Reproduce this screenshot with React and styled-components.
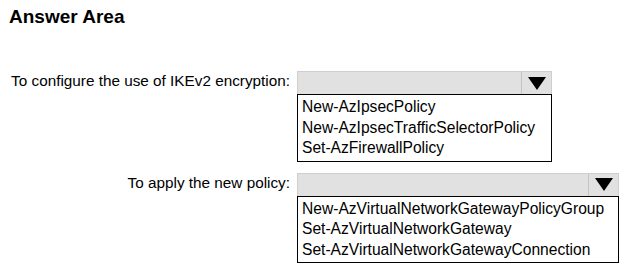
import React from "react";
import styled, { createGlobalStyle } from "styled-components";

const Global = createGlobalStyle`
  html, body { margin: 0; padding: 0; background: #fff; }
  body { font-family: "Liberation Sans", Arial, sans-serif; color: #000; }
`;

const Page = styled.div`
  width: 624px;
  height: 267px;
  padding: 6px 0 0 9px;
  box-sizing: border-box;
`;

const Title = styled.h1`
  margin: 0;
  font-size: 19px;
  font-weight: bold;
  line-height: 22px;
`;

const Rows = styled.div`
  display: grid;
  grid-template-columns: 281px auto;
  column-gap: 7px;
  row-gap: 11px;
  margin-top: 43px;
  align-items: start;
`;

const Label = styled.div`
  font-size: 15.3px;
  line-height: 19px;
  text-align: right;
  white-space: nowrap;
`;

const Dropdown = styled.div`
  width: ${(p) => p.$w}px;
  display: flex;
  flex-direction: column;
`;

const Header = styled.div`
  height: 23px;
  display: flex;
  background: #e1e1e1;
  border: 1px solid #cfcfcf;
  border-bottom: none;
  box-sizing: border-box;
`;

const HeaderField = styled.div`
  flex: 1;
`;

const ArrowCell = styled.div`
  width: 29px;
  border-left: 1px solid #c4c4c4;
  display: flex;
  align-items: center;
  justify-content: center;
`;

const List = styled.div`
  border: 1px solid #000;
  padding: 2px 0 2px 4px;
`;

const Item = styled.div`
  font-size: 15.6px;
  line-height: 20.5px;
  white-space: nowrap;
`;

const Arrow = () => (
  <svg width="18" height="13" viewBox="0 0 18 13">
    <polygon points="0,0 18,0 9,13" fill="#000" />
  </svg>
);

const Select = ({ w, items }) => (
  <Dropdown $w={w}>
    <Header>
      <HeaderField />
      <ArrowCell>
        <Arrow />
      </ArrowCell>
    </Header>
    <List>
      {items.map((t) => (
        <Item key={t}>{t}</Item>
      ))}
    </List>
  </Dropdown>
);

export default function App() {
  return (
    <Page>
      <Global />
      <Title>Answer Area</Title>
      <Rows>
        <Label>To configure the use of IKEv2 encryption:</Label>
        <Select
          w={255}
          items={[
            "New-AzIpsecPolicy",
            "New-AzIpsecTrafficSelectorPolicy",
            "Set-AzFirewallPolicy",
          ]}
        />
        <Label>To apply the new policy:</Label>
        <Select
          w={322}
          items={[
            "New-AzVirtualNetworkGatewayPolicyGroup",
            "Set-AzVirtualNetworkGateway",
            "Set-AzVirtualNetworkGatewayConnection",
          ]}
        />
      </Rows>
    </Page>
  );
}
